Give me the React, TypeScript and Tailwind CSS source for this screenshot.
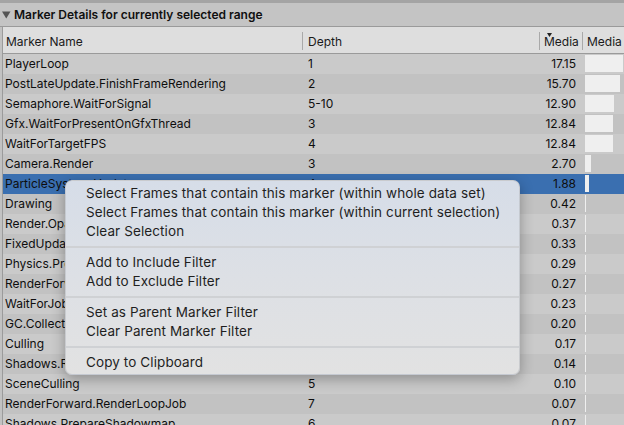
import React from "react";

type Row = {
  name: string;
  depth: string;
  median: number;
};

const rows: Row[] = [
  { name: "PlayerLoop", depth: "1", median: 17.15 },
  { name: "PostLateUpdate.FinishFrameRendering", depth: "2", median: 15.7 },
  { name: "Semaphore.WaitForSignal", depth: "5-10", median: 12.9 },
  { name: "Gfx.WaitForPresentOnGfxThread", depth: "3", median: 12.84 },
  { name: "WaitForTargetFPS", depth: "4", median: 12.84 },
  { name: "Camera.Render", depth: "3", median: 2.7 },
  { name: "ParticleSystem.Update", depth: "4", median: 1.88 },
  { name: "Drawing", depth: "4", median: 0.42 },
  { name: "Render.OpaqueGeometry", depth: "6", median: 0.37 },
  { name: "FixedUpdate.PhysicsFixedUpdate", depth: "2", median: 0.33 },
  { name: "Physics.Processing", depth: "4", median: 0.29 },
  { name: "RenderForwardAlpha.Render", depth: "6", median: 0.27 },
  { name: "WaitForJobGroupID", depth: "6", median: 0.23 },
  { name: "GC.Collect", depth: "3", median: 0.2 },
  { name: "Culling", depth: "4", median: 0.17 },
  { name: "Shadows.RenderJob", depth: "6", median: 0.14 },
  { name: "SceneCulling", depth: "5", median: 0.1 },
  { name: "RenderForward.RenderLoopJob", depth: "7", median: 0.07 },
  { name: "Shadows.PrepareShadowmap", depth: "6", median: 0.07 },
];

const SELECTED = 6;
const MAX = 17.15;

// menu entries, null = separator
const menuItems: (string | null)[] = [
  "Select Frames that contain this marker (within whole data set)",
  "Select Frames that contain this marker (within current selection)",
  "Clear Selection",
  null,
  "Add to Include Filter",
  "Add to Exclude Filter",
  null,
  "Set as Parent Marker Filter",
  "Clear Parent Marker Filter",
  null,
  "Copy to Clipboard",
];

const HeaderDivider = () => <div className="w-px h-[18px] bg-[#a9a9a9] self-end mb-[3px]" />;

export default function App() {
  return (
    <div className="relative w-[624px] h-[425px] overflow-hidden bg-[#c2c2c2] font-['Inter','Noto_Sans',sans-serif] text-[#0e0e0e]">
      <div className="h-[3px] bg-[#a4a4a4]" />

      {/* section title */}
      <div className="h-[24px] flex items-center bg-[#c4c4c4] border-b border-[#9a9a9a]">
        <svg width="9" height="8" viewBox="0 0 9 8" className="ml-[2px] mr-[3px] mt-[1px]">
          <path d="M0 0.5 H8.5 L4.25 7.5 Z" fill="#555" />
        </svg>
        <span className="text-[12px] font-semibold text-[#101010]">
          Marker Details for currently selected range
        </span>
      </div>

      {/* table */}
      <div className="ml-[2px] border-l border-[#9b9b9b]">
        <div className="h-[27px] flex bg-[#dedede] border-b border-[#9a9a9a] text-[12px] text-[#1a1a1a]">
          <div className="w-[299px] flex items-end pb-[2px] pl-[3px]">Marker Name</div>
          <HeaderDivider />
          <div className="w-[236px] flex items-end pb-[2px] pl-[5px]">Depth</div>
          <HeaderDivider />
          <div className="relative w-[42px] flex items-end pb-[2px] pl-[4px] overflow-hidden whitespace-nowrap">
            <svg width="5" height="4" viewBox="0 0 5 4" className="absolute left-[7px] top-[6px]">
              <path d="M0 0 H5 L2.5 4 Z" fill="#222" />
            </svg>
            Media
          </div>
          <HeaderDivider />
          <div className="flex-1 flex items-end pb-[2px] pl-[4px] overflow-hidden whitespace-nowrap">Media</div>
        </div>

        {rows.map((row, i) => {
          const selected = i === SELECTED;
          const barWidth = Math.max(1, Math.round((row.median / MAX) * 38));
          return (
            <div
              key={row.name}
              className={
                "h-[20px] flex items-center text-[12px] " +
                (selected ? "bg-[#3a6fb0]" : i % 2 === 0 ? "bg-[#cacaca]" : "bg-[#c2c2c2]")
              }
            >
              <div className="w-[300px] pl-[2px] whitespace-nowrap overflow-hidden">{row.name}</div>
              <div className="w-[236px] pl-[5px]">{row.depth}</div>
              <div className="w-[43px] text-right pr-[6px]">{row.median.toFixed(2)}</div>
              <div className="flex-1 h-full pl-[3px] py-[1px] flex">
                <div className="h-[17px] bg-[#efefef]" style={{ width: barWidth }} />
              </div>
            </div>
          );
        })}
      </div>

      {/* context menu */}
      <div className="absolute left-[65px] top-[180px] w-[455px] h-[195px] rounded-[7px] bg-gradient-to-b from-[#d6dde8] via-[#dde0e5] to-[#e2e2e2] shadow-[0_4px_14px_rgba(0,0,0,0.3)] border border-[#b9bcc2]/60 pt-[3px] text-[13.5px] tracking-[0.1px] text-[#1f1f1f]">
        {menuItems.map((item, i) =>
          item === null ? (
            <div key={i} className="h-[12px] flex items-center">
              <div className="h-[2px] w-full bg-[#cfd1d4]" />
            </div>
          ) : (
            <div key={i} className="h-[19px] flex items-center pl-[20px] whitespace-nowrap">
              {item}
            </div>
          )
        )}
      </div>
    </div>
  );
}
